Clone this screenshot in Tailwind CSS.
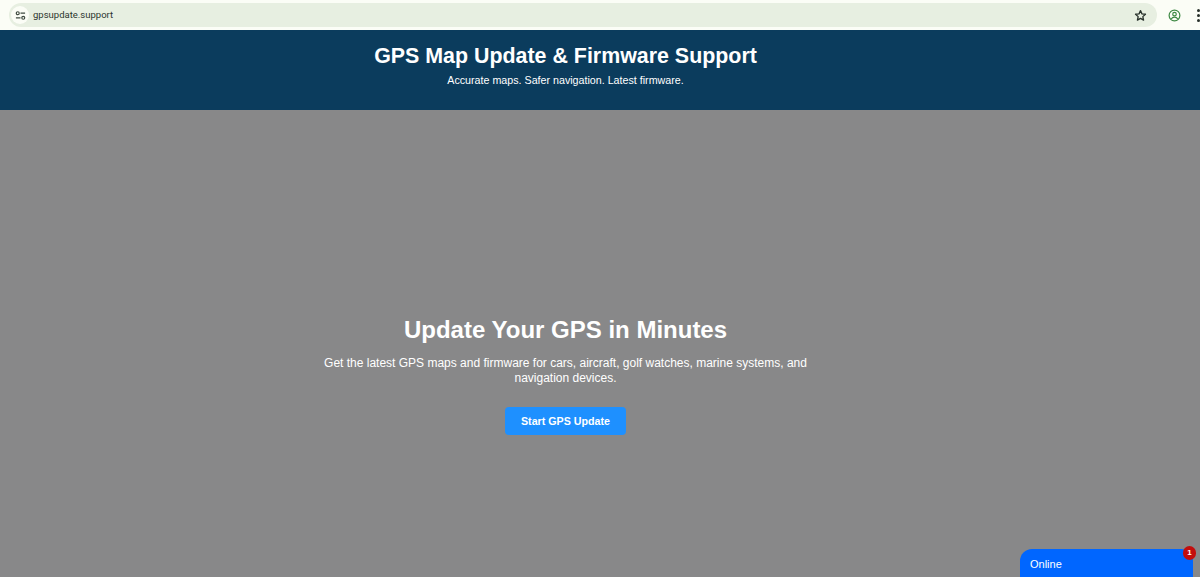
<!DOCTYPE html>
<html>
<head>
<meta charset="utf-8">
<script src="https://cdn.jsdelivr.net/npm/@tailwindcss/browser@4"></script>
</head>
<body class="h-[577px] w-[1200px] overflow-hidden relative bg-[#888889] font-['Liberation_Sans',Arial,sans-serif] flex flex-col">
  <div class="h-[30px] shrink-0 bg-[#fbfdf6] flex items-center pl-[9px]">
    <div class="h-6 w-[1148px] shrink-0 rounded-full bg-[#e7efe1] flex items-center pl-[2px] pr-[10px]">
      <div class="w-[18px] h-[18px] rounded-full bg-[#fbfdf6] flex items-center justify-center">
        <svg width="11" height="11" viewBox="0 0 12 12" fill="none" stroke="#3f4a40" stroke-width="1.3"><circle cx="3" cy="3.5" r="1.6"/><path d="M6 3.5h5M1 8.5h5"/><circle cx="9" cy="8.5" r="1.6"/></svg>
      </div>
      <span class="ml-[4px] text-[9.5px] text-[#2c352e] font-['Roboto',sans-serif]">gpsupdate.support</span>
      <svg class="ml-auto" width="13" height="13" viewBox="0 0 24 24" fill="none" stroke="#27302a" stroke-width="2.4" stroke-linejoin="round"><path d="M12 3l2.7 6 6.5.7-4.9 4.4 1.4 6.4L12 17.2l-5.7 3.3 1.4-6.4-4.9-4.4 6.5-.7z"/></svg>
    </div>
    <svg class="ml-[11px]" width="13" height="13" viewBox="0 0 14 14" fill="none" stroke="#3f8a45" stroke-width="1.3"><circle cx="7" cy="7" r="5.8"/><circle cx="7" cy="5.6" r="1.9"/><path d="M3.4 10.8c1-1.5 2.2-2 3.6-2s2.6.5 3.6 2"/></svg>
    <div class="ml-[16px] flex flex-col gap-[2px]">
      <span class="w-[3px] h-[3px] rounded-full bg-[#27302a]"></span>
      <span class="w-[3px] h-[3px] rounded-full bg-[#27302a]"></span>
      <span class="w-[3px] h-[3px] rounded-full bg-[#27302a]"></span>
    </div>
  </div>
  <header class="h-20 shrink-0 bg-[#0b3c5d] text-white pr-[69px] pt-[13px] text-center">
    <h1 class="text-[21.4px] leading-[26px] font-bold">GPS Map Update &amp; Firmware Support</h1>
    <p class="text-[10.7px] leading-[15px] mt-[4px]">Accurate maps. Safer navigation. Latest firmware.</p>
  </header>
  <main class="flex-1 pr-[69px] pt-[205px] text-white flex flex-col items-center text-center">
    <h2 class="text-[24px] leading-[30px] font-bold">Update Your GPS in Minutes</h2>
    <p class="w-[500px] text-[12px] leading-[15px] mt-[11px]">Get the latest GPS maps and firmware for cars, aircraft, golf watches, marine systems, and navigation devices.</p>
    <button class="mt-[21px] w-[121px] h-[28px] rounded-[4px] bg-[#1e90ff] text-white text-[10.7px] font-bold">Start GPS Update</button>
  </main>
  <div class="absolute left-[1020px] top-[549px] w-[173px] h-7 rounded-t-[12px] bg-[#0066ff] text-white text-[11px] pl-[10px] pt-[8px] leading-[14px]">Online</div>
  <div class="absolute left-[1183px] top-[546px] w-[13px] h-[14px] rounded-full bg-[#c30d0d] text-white text-[8px] font-bold leading-[14px] text-center">1</div>
</body>
</html>
